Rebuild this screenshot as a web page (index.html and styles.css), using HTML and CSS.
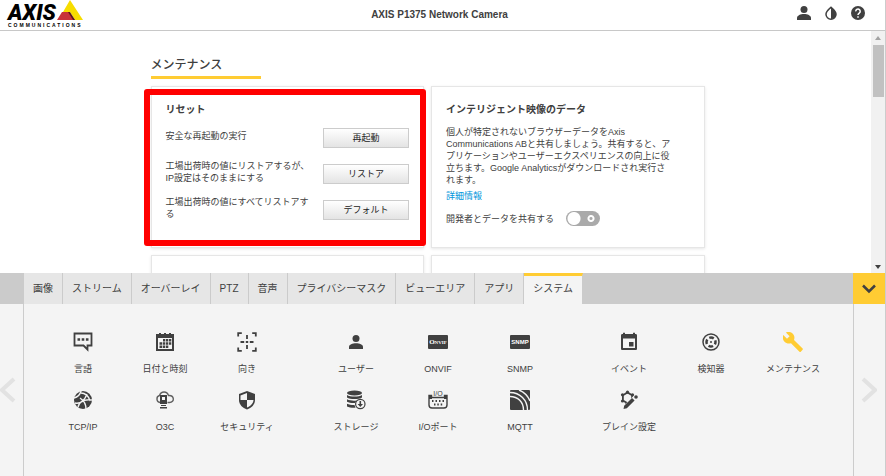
FILE: index.html
```html
<!DOCTYPE html>
<html lang="ja">
<head>
    <meta charset="UTF-8">
    <meta name="viewport" content="width=device-width, initial-scale=1.0">
    <title>AXIS P1375 Network Camera</title>
    <link rel="stylesheet" href="styles.css">
</head>
<body>
    <header class="top-bar">
        <a href="#" class="logo" aria-label="AXIS Communications">
            <svg width="84" height="30" viewBox="0 0 84 30">
                <path d="M70 0 L83 20 H75 L70 12 H63 Z" fill="#f7dd00"/>
                <path d="M62 12 H69 L75 20 H57 Z" fill="#c8323a"/>
                <path d="M68 12 H70 L75 20 H73 Z" fill="#5a1a1a"/>
                <text x="8" y="20" class="logo-name">AXIS</text>
                <text x="8" y="27" class="logo-sub">COMMUNICATIONS</text>
            </svg>
        </a>
        <h1 class="product-name">AXIS P1375 Network Camera</h1>
        <nav class="top-actions">
            <button type="button" aria-label="ユーザー">
                <svg width="14" height="14" viewBox="0 0 14 14"><circle cx="7" cy="3.500" r="3.500"/><path d="M0 14v-2c0-2.500 3.500-4 7-4s7 1.500 7 4v2z"/></svg>
            </button>
            <button type="button" aria-label="コントラスト">
                <svg width="12" height="14" viewBox="0 0 12 14"><path d="M6 1.200C3.600 3.600 1 5.600 1 8.200a5 5 0 0 0 10 0C11 5.600 8.400 3.600 6 1.200z" fill="none" stroke="#404040" stroke-width="1.500"/><path d="M6 1v12a5 5 0 0 0 5-4.600C11 5.600 8.400 3.400 6 1z"/></svg>
            </button>
            <button type="button" aria-label="ヘルプ">
                <svg width="14" height="14" viewBox="0 0 14 14"><circle cx="7" cy="7" r="7"/><path d="M4.800 5.400a2.200 2.200 0 1 1 3.600 1.600C7.500 7.700 7 8 7 9.100M7 10.300v1.500" fill="none" stroke="#fff" stroke-width="1.500"/></svg>
            </button>
        </nav>
    </header>

    <div class="viewport">
        <main class="content">
            <h2 class="page-title">メンテナンス</h2>
            <div class="cards">
                <section class="card highlighted">
                    <h3>リセット</h3>
                    <div class="reset-row">
                        <p>安全な再起動の実行</p>
                        <button type="button" class="btn">再起動</button>
                    </div>
                    <div class="reset-row">
                        <p>工場出荷時の値にリストアするが、<br>IP設定はそのままにする</p>
                        <button type="button" class="btn">リストア</button>
                    </div>
                    <div class="reset-row">
                        <p>工場出荷時の値にすべてリストアす<br>る</p>
                        <button type="button" class="btn">デフォルト</button>
                    </div>
                </section>
                <section class="card">
                    <h3>インテリジェント映像のデータ</h3>
                    <p class="card-text">個人が特定されないブラウザーデータをAxis<br>Communications ABと共有しましょう。共有すると、ア<br>プリケーションやユーザーエクスペリエンスの向上に役<br>立ちます。Google Analyticsがダウンロードされ実行さ<br>れます。</p>
                    <a href="#" class="more">詳細情報</a>
                    <div class="share-row">
                        <label for="share">開発者とデータを共有する</label>
                        <input type="checkbox" id="share" class="toggle">
                    </div>
                </section>
                <section class="card"></section>
                <section class="card"></section>
            </div>
        </main>
        <div class="scrollbar">
            <span class="arrow up"></span>
            <span class="thumb"></span>
            <span class="arrow down"></span>
        </div>
    </div>

    <nav class="tabs">
        <button type="button">画像</button>
        <button type="button">ストリーム</button>
        <button type="button">オーバーレイ</button>
        <button type="button">PTZ</button>
        <button type="button">音声</button>
        <button type="button">プライバシーマスク</button>
        <button type="button">ビューエリア</button>
        <button type="button">アプリ</button>
        <button type="button" class="active">システム</button>
        <button type="button" class="collapse" aria-label="閉じる">
            <svg width="14" height="10" viewBox="0 0 14 10"><path d="M1 1.500l6 6 6-6" fill="none" stroke="#404040" stroke-width="2.500"/></svg>
        </button>
    </nav>

    <div class="panel">
        <button type="button" class="pager prev" aria-label="前へ">
            <svg width="16" height="26" viewBox="0 0 16 26"><path d="M14 2L2 13l12 11" fill="none" stroke="#e2e2e2" stroke-width="4"/></svg>
        </button>
        <div class="groups">
            <div class="group">
                <a href="#"><svg viewBox="0 0 20 20"><path d="M1.500 1.500h17v12h-4v4l-4-4h-9z" fill="none" stroke="#404040" stroke-width="1.800"/><path d="M4.500 6.200h2.600v2.600H4.500zM8.700 6.200h2.600v2.600H8.700zM12.900 6.200h2.600v2.600h-2.600z"/></svg>言語</a>
                <a href="#"><svg viewBox="0 0 20 20"><path fill-rule="evenodd" d="M1 2h3V1h2v1h3V1h2v1h3V1h2v1h3v17H1zM3 6v11h14V6z"/><path d="M8 7h2.300v2.400H8zM11 7h2.300v2.400H11zM14 7h2.300v2.400H14zM4.500 10.300h2.800v2.400H4.500zM8 10.300h2.300v2.400H8zM11 10.300h2.300v2.400H11zM14 10.300h2.300v2.400H14zM4.500 13.600h2.800V16H4.500zM8 13.600h2.300V16H8zM11 13.600h2.300V16H11z"/></svg>日付と時刻</a>
                <a href="#"><svg viewBox="0 0 20 20"><path d="M1.200 4.500V1.200h3.600M15.200 1.200h3.600v3.300M18.800 15.500v3.300h-3.600M4.800 18.800H1.200v-3.300M10 3v4M10 13v4M3.500 10h3.700M8.800 10h2.400M12.800 10h3.700" fill="none" stroke="#404040" stroke-width="1.800"/></svg>向き</a>
                <a href="#"><svg viewBox="0 0 20 20"><circle cx="10" cy="10" r="9"/><path d="M1 8c4-1 6-3 7-7M8 3c4 0 8 3 9 8M2 13c5 1 9-1 12-9M5 17c1-5 6-8 14-7M7 8c3 2 6 6 6 11" fill="none" stroke="#f4f4f4" stroke-width="1.400"/></svg>TCP/IP</a>
                <a href="#"><svg viewBox="0 0 20 20"><path d="M5 12.500a3.600 3.600 0 0 1-.5-7C6 1 12 .8 13.500 5.500c6-.5 6.500 7 1 7h-2" fill="none" stroke="#606060" stroke-width="1.400"/><path fill-rule="evenodd" d="M5 5h7v9H5zM7 7v3h3V7zM6 15h5v1H6zM5 17h7v1.500H5z"/></svg>O3C</a>
                <a href="#"><svg viewBox="0 0 20 20"><path d="M10 1l8 3v6c0 4.500-3.500 8-8 9.500C5.500 18 2 14.500 2 10V4z"/><path d="M10 3v7H3.500V5.400zM10 10h6.500c-.2 3.500-3 6-6.500 7.500z" fill="#f4f4f4"/></svg>セキュリティ</a>
            </div>
            <div class="group">
                <a href="#"><svg viewBox="0 0 20 20"><circle cx="10" cy="6.500" r="3.500"/><path d="M3 17v-2c0-2.500 3.500-3.700 7-3.700s7 1.200 7 3.700v2z"/></svg>ユーザー</a>
                <a href="#"><svg viewBox="0 0 20 20"><rect x="0" y="3" width="20" height="14" rx="1"/><text x="10" y="12" class="badge-serif">O<tspan class="small-caps">NVIF</tspan></text></svg>ONVIF</a>
                <a href="#"><svg viewBox="0 0 20 20"><rect x="0" y="3" width="20" height="14" rx="1"/><text x="10" y="12" class="badge-sans">SNMP</text></svg>SNMP</a>
                <a href="#"><svg viewBox="0 0 20 20"><ellipse cx="8.500" cy="3" rx="7.500" ry="2.400"/><path d="M1 5c3 2 12 2 15 0v2.500c-3 2-12 2-15 0zM1 9.300c3 1.500 7 1.600 9.500 1.200L9 13c-3 .2-6-.2-8-1.200zM1 13.800c2 1 5 1.400 7.500 1.300l1 2.700C6 18 3 17.500 1 16.500z"/><circle cx="14.300" cy="14" r="4.700" fill="#f4f4f4" stroke="#404040" stroke-width="1.200"/><path d="M13.500 11h1.600v3h1.900l-2.700 3-2.700-3h1.900z"/></svg>ストレージ</a>
                <a href="#"><svg viewBox="0 0 20 20"><text x="10" y="6" class="badge-port">I/O</text><path d="M1 5.500h2.500v2h13v-2H19V15c0 2-1 3-3 3H4c-2 0-3-1-3-3z" fill="none" stroke="#404040" stroke-width="1.400"/><path d="M1 5h3v4H1zM16 5h3v4h-3zM4 10h1.500v2H4zM7.500 10H9v2H7.500zM11 10h1.500v2H11zM14.500 10H16v2h-1.500zM6 13.500h1.500v2H6zM9.300 13.500h1.500v2H9.300zM12.700 13.500h1.500v2h-1.500z"/></svg>I/Oポート</a>
                <a href="#"><svg viewBox="0 0 20 20"><rect width="20" height="20" rx="1"/><path d="M0 6.500c8 0 13.500 5.500 13.500 13.500M0 2.500c10 0 17.500 7.500 17.500 17.500M9 0c5 2 9 6 11 11" fill="none" stroke="#f4f4f4" stroke-width="1.400"/></svg>MQTT</a>
            </div>
            <div class="group">
                <a href="#"><svg viewBox="0 0 20 20"><path fill-rule="evenodd" d="M2 3.500C2 2.500 2.500 2 3.500 2H4V.8h2V2h8V.8h2V2h.5c1 0 1.500.5 1.500 1.500v13c0 1-.5 1.500-1.500 1.500h-13C2.500 18 2 17.500 2 16.500zM4 6.500V16h12V6.500z"/><path d="M10 10h4.500v4.500H10z"/></svg>イベント</a>
                <a href="#"><svg viewBox="0 0 20 20"><g fill="none" stroke="#404040"><circle cx="10" cy="10" r="8" stroke-width="1.500"/><circle cx="10" cy="10" r="4.500" stroke-width="2.500" stroke-dasharray="4.700 2.370" stroke-dashoffset="2.350"/></g><circle cx="10" cy="10" r="1"/></svg>検知器</a>
                <a href="#" class="current"><svg viewBox="0 0 20 20"><path d="M19.600 16.500L11 8c.9-2.200.4-4.700-1.400-6.400C7.700-.3 5-.6 2.900.5L6.600 4.200 4 6.800.3 3.100C-.8 5.300-.3 8 1.500 9.800c1.700 1.800 4.300 2.200 6.500 1.400l8.500 8.500c.4.400 1 .4 1.300 0l1.800-1.900c.4-.4.400-1 0-1.300z"/></svg>メンテナンス</a>
                <a href="#"><svg viewBox="0 0 20 20"><path d="M8.500 2.500l4.600 2.700v5.400l-4.600 2.700-4.600-2.700V5.200z" fill="none" stroke="#404040" stroke-width="1.800"/><circle cx="8.500" cy="2.200" r="1.600"/><circle cx="3.500" cy="4.800" r="1.600"/><circle cx="13.500" cy="4.800" r="1.600"/><circle cx="3.500" cy="11" r="1.600"/><circle cx="8" cy="13.500" r="1.600"/><path d="M6 18l10-10" stroke="#f4f4f4" stroke-width="5"/><path d="M4.500 19l.7-3.300L13 8l2.600 2.600-7.800 7.700z"/><circle cx="17" cy="7" r="1.800"/></svg>プレイン設定</a>
            </div>
        </div>
        <button type="button" class="pager next" aria-label="次へ">
            <svg width="16" height="26" viewBox="0 0 16 26"><path d="M2 2l12 11L2 24" fill="none" stroke="#e2e2e2" stroke-width="4"/></svg>
        </button>
    </div>
</body>
</html>
```
FILE: styles.css
```css
* {
    box-sizing: border-box;
}
body {
    display: flex;
    flex-direction: column;
    height: 100vh;
    margin: 0;
    border-right: 1px solid #ccc;
    background: #fff;
    color: #404040;
    font-family: "Liberation Sans", "Noto Sans CJK JP", sans-serif;
    font-size: 9px;
    line-height: 12px;
    overflow: hidden;
}
h1, h2, h3, p {
    margin: 0;
}
button {
    padding: 0;
    border: none;
    background: none;
    color: inherit;
    font: inherit;
    cursor: pointer;
}
a {
    color: inherit;
    text-decoration: none;
}
svg {
    display: block;
    fill: #404040;
}

/* header */
.top-bar {
    display: grid;
    grid-template-columns: 1fr auto 1fr;
    align-items: center;
    flex: none;
    height: 31px;
    padding-right: 6px;
    border-bottom: 1px solid #c8c8c8;
}
.logo-name {
    fill: #000;
    font-family: Roboto, sans-serif;
    font-size: 22px;
    font-style: italic;
    font-weight: 900;
}
.logo-sub {
    fill: #000;
    font-size: 5px;
    font-weight: bold;
    letter-spacing: 2px;
}
.product-name {
    font-size: 10px;
    line-height: 28px;
}
.top-actions {
    display: flex;
    justify-content: flex-end;
    align-items: center;
    gap: 14px;
    padding: 0 14px 4px 0;
}

/* scrolling content */
.viewport {
    display: flex;
    flex: 1;
    min-height: 0;
}
.content {
    flex: 1;
    padding: 26px 14px 0 0;
    overflow: hidden;
}
.page-title {
    width: 110px;
    padding-bottom: 3px;
    border-bottom: 3px solid #fc3;
    font-size: 12px;
    font-weight: 500;
    line-height: 16px;
}
.content > * {
    margin-left: max(8px, calc(50% - 278px));
}
.cards {
    display: grid;
    grid-template-columns: 1fr 1fr;
    gap: 7px;
    max-width: 554px;
    margin-top: 7px;
}
.card {
    position: relative;
    min-height: 162px;
    padding: 17px 14px 10px;
    border: 1px solid #e6e6e6;
    box-shadow: 0 1px 3px rgba(0, 0, 0, 0.1);
}
.card h3 {
    margin-bottom: 8px;
    font-size: 10px;
    line-height: 12px;
}
.highlighted::after {
    content: "";
    position: absolute;
    inset: 2px -3px 1px -8px;
    border: 6px solid #f00;
    border-radius: 3px;
    pointer-events: none;
}
.reset-row {
    display: flex;
    justify-content: space-between;
    align-items: center;
    min-height: 28px;
    margin-bottom: 8px;
    white-space: nowrap;
}
.reset-row p {
    padding-bottom: 4px;
}
.btn {
    width: 86px;
    height: 20px;
    border: 1px solid #ccc;
    background: linear-gradient(#fff, #e4e4e4);
    color: #222;
}
.more {
    display: block;
    margin: 4px 0 9px;
    color: #0095db;
}
.card-text {
    margin-top: 10px;
    white-space: nowrap;
}
.share-row {
    display: flex;
    align-items: center;
    gap: 12px;
}
.toggle {
    appearance: none;
    width: 34px;
    height: 15px;
    margin: 0;
    border-radius: 8px;
    background:
        radial-gradient(circle at 8px 50%, #fff 6px, transparent 7px),
        radial-gradient(circle at 25px 50%, transparent 1px, #fff 2px, #fff 3px, transparent 4px),
        #aaa;
}
.scrollbar {
    display: flex;
    flex-direction: column;
    align-items: center;
    flex: none;
    width: 14px;
    padding: 5px 0 4px;
    background: #f1f1f1;
}
.thumb {
    width: 11px;
    height: 52px;
    margin: 5px 0 auto;
    background: #c1c1c1;
}
.arrow {
    border: 3px solid transparent;
}
.up {
    border-top: none;
    border-bottom: 4px solid #a3a3a3;
}
.down {
    border-bottom: none;
    border-top: 4px solid #404040;
}

/* tabs */
.tabs {
    display: flex;
    flex: none;
    height: 31px;
    padding-left: 24px;
    background: #cbcbcb;
    font-size: 10px;
}
.tabs button {
    padding: 0 9px;
    border-right: 1px solid #cbcbcb;
    background: #e6e6e6;
    white-space: nowrap;
}
.tabs .active {
    padding-bottom: 3px;
    border-top: 3px solid #fc3;
    background: #f4f4f4;
}
.tabs .collapse {
    width: 32px;
    margin-left: auto;
    border: none;
    background: #fc3;
}

/* system panel */
.panel {
    display: flex;
    flex: none;
    min-height: 172px;
    background: #f4f4f4;
}
.pager {
    display: flex;
    align-items: center;
    flex: none;
}
.prev {
    width: 24px;
    border-right: 1px solid #ccc;
}
.next {
    width: 32px;
    padding-left: 7px;
    border-left: 1px solid #ccc;
}
.groups {
    display: flex;
    justify-content: center;
    flex: 1;
    gap: 27px;
    padding: 28px 1px 0 0;
}
.group {
    display: grid;
    grid-template-columns: repeat(3, 82px);
    align-content: start;
    row-gap: 15px;
}
.group a {
    display: flex;
    flex-direction: column;
    align-items: center;
    gap: 11px;
}
.group svg {
    width: 20px;
    height: 20px;
}
.group .current svg {
    fill: #fc3;
}
.badge-serif, .badge-sans {
    fill: #fff;
    font-size: 6px;
    font-weight: bold;
    text-anchor: middle;
}
.badge-serif {
    font-family: "Liberation Serif", serif;
    font-size: 7px;
}
.small-caps {
    font-size: 5px;
}
.badge-port {
    font-size: 7px;
    text-anchor: middle;
}
```
